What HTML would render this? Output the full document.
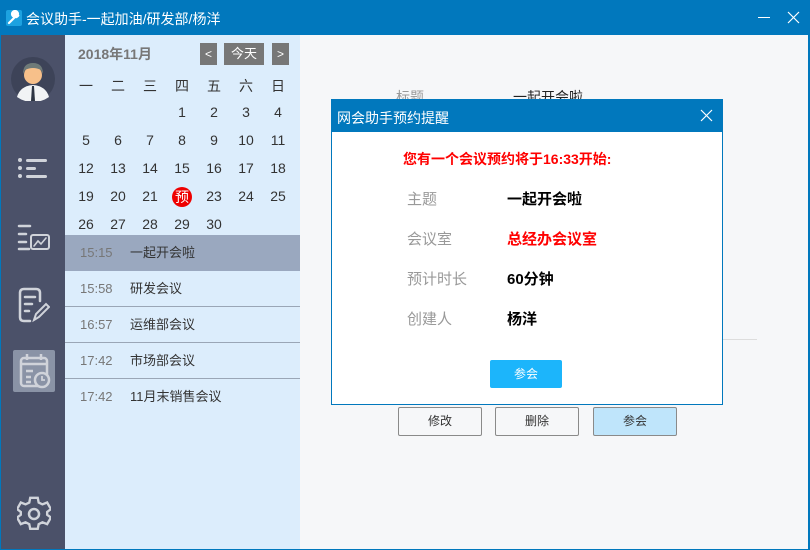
<!DOCTYPE html>
<html><head><meta charset="utf-8"><style>
*{margin:0;padding:0;box-sizing:border-box}
body{width:810px;height:550px;overflow:hidden;font-family:"Liberation Sans","Noto Sans CJK SC",sans-serif;background:#0078bd;position:relative}
.a{position:absolute}
.tb{left:0;top:0;width:810px;height:35px;background:#0178bd;color:#fff;font-size:14px}
.side{left:1px;top:35px;width:64px;height:514px;background:#4b5169}
.cal{left:65px;top:35px;width:235px;height:514px;background:#dcedfc}
.main{left:300px;top:35px;width:508px;height:514px;background:#f6f7f9}
.d{position:absolute;width:32px;text-align:center;font-size:14px;color:#333}
.it{position:absolute;left:0;width:235px;height:36px;font-size:13px;color:#333;border-bottom:1px solid #9aa6b6;line-height:36px}
.it .t{position:absolute;left:15px;top:0;color:#777}
.it .n{position:absolute;left:65px;top:0}
.btn{position:absolute;top:407px;width:84px;height:29px;border:1px solid #8a8a8a;border-radius:2px;background:#f6f7f9;font-size:12px;text-align:center;line-height:27px;color:#333}
</style></head><body>
<div class="a tb">
<svg class="a" style="left:6px;top:10px" width="16" height="16"><rect width="16" height="16" rx="2" fill="#1da2e0"/><path d="M3 13L9 7M9 7A3 3 0 1 1 12 4L10.5 5.5L11 6.5L12.5 5A3 3 0 0 1 9 7" stroke="#fff" stroke-width="2.2" fill="#fff" stroke-linecap="round"/></svg>
<div class="a" style="left:26px;top:9px">会议助手-一起加油/研发部/杨洋</div>
<div class="a" style="left:758px;top:17px;width:12px;height:1px;background:#fff"></div>
<svg class="a" style="left:787px;top:11px" width="13" height="13"><path d="M1 1L12 12M12 1L1 12" stroke="#fff" stroke-width="1.2"/></svg>
</div>
<div class="a side">
<svg class="a" style="left:10px;top:22px" width="44" height="44"><circle cx="22" cy="22" r="22" fill="#3d4358"/><path d="M6 40Q9 29 22 28Q35 29 38 40Q31 45 22 45Q13 45 6 40Z" fill="#f1f3f5"/><circle cx="22" cy="18" r="9" fill="#f7c08a"/><path d="M12 17Q12 6 22 6Q32 6 32 17L30 13Q22 9 14 13Z" fill="#6e7a78"/><path d="M21 29L23 29L24 44L20 44Z" fill="#2d3443"/></svg>
<svg class="a" style="left:16px;top:121px" width="32" height="26" fill="#d0d3da"><circle cx="3" cy="4" r="2"/><rect x="9" y="3" width="21" height="3" rx="1.5"/><circle cx="3" cy="12" r="2"/><rect x="9" y="11" width="10" height="3" rx="1.5"/><circle cx="3" cy="20" r="2"/><rect x="9" y="19" width="21" height="3" rx="1.5"/></svg>
<svg class="a" style="left:16px;top:188px" width="34" height="30" fill="none" stroke="#d0d3da" stroke-width="2.5" stroke-linecap="round"><path d="M2 3H13M2 11H9M2 19H9M2 26H12"/><rect x="14" y="12" width="18" height="14" rx="2" stroke-width="2"/><path d="M17 23L21 18L24 21L29 15" stroke-width="1.6"/></svg>
<svg class="a" style="left:17px;top:252px" width="32" height="36" fill="none" stroke="#d0d3da" stroke-width="2.5" stroke-linecap="round"><path d="M22 14V6Q22 2 18 2H6Q2 2 2 6V30Q2 34 6 34H12"/><path d="M7 10H17M7 17H14M7 24H11"/><path d="M16 33L18 27L28 17L31 20L21 30Z" stroke-width="2"/></svg>
<div class="a" style="left:12px;top:315px;width:42px;height:42px;background:#8a93a6;border-radius:2px"></div>
<svg class="a" style="left:18px;top:318px" width="32" height="36" fill="none" stroke="#d0d3da" stroke-width="2.5"><rect x="2" y="5" width="26" height="28" rx="3"/><path d="M8 1V7M22 1V7M2 11H28M7 18H14M7 24H12M7 29H12"/><circle cx="23" cy="27" r="7" fill="#8a93a6"/><path d="M23 23V27H26" stroke-width="1.8"/></svg>
<svg class="a" style="left:16px;top:461px" width="34" height="36" fill="none" stroke="#d0d3da" stroke-width="2.5"><path d="M13 3H21L22 8L26 10L31 8L35 15L31 18L31 21L35 24L31 31L26 29L22 31L21 36H13L12 31L8 29L3 31L-1 24L3 21L3 18L-1 15L3 8L8 10L12 8Z" transform="translate(1 -1) scale(0.94)"/><circle cx="17" cy="18" r="5"/></svg>
</div>
<div class="a cal">
<div class="a" style="left:13px;top:9px;font-size:14px;font-weight:bold;color:#777">2018年11月</div>
<div class="a" style="left:135px;top:8px;width:17px;height:22px;background:#777;color:#fff;font-size:12px;text-align:center;line-height:22px">&lt;</div>
<div class="a" style="left:159px;top:8px;width:40px;height:22px;background:#777;color:#fff;font-size:13px;text-align:center;line-height:22px">今天</div>
<div class="a" style="left:207px;top:8px;width:17px;height:22px;background:#777;color:#fff;font-size:12px;text-align:center;line-height:22px">&gt;</div>
<div id="g"></div>
<div class="it" style="top:200px;background:#9aa8bf;border:none"><span class="t">15:15</span><span class="n">一起开会啦</span></div>
<div class="it" style="top:236px"><span class="t">15:58</span><span class="n">研发会议</span></div>
<div class="it" style="top:272px"><span class="t">16:57</span><span class="n">运维部会议</span></div>
<div class="it" style="top:308px"><span class="t">17:42</span><span class="n">市场部会议</span></div>
<div class="it" style="top:344px;border:none"><span class="t">17:42</span><span class="n">11月末销售会议</span></div>
</div>
<div class="a main">
<div class="a" style="left:96px;top:52px;font-size:14px;color:#999">标题</div>
<div class="a" style="left:213px;top:52px;font-size:14px;color:#222">一起开会啦</div>
<div class="a" style="left:422px;top:304px;width:35px;height:1px;background:#ddd"></div>
</div>
<div class="btn" style="left:398px">修改</div>
<div class="btn" style="left:495px">删除</div>
<div class="btn" style="left:593px;background:#bfe5fb">参会</div>
<div class="a" style="left:331px;top:99px;width:392px;height:306px;background:#fff;border:1px solid #0178bd">
<div class="a" style="left:0;top:0;width:390px;height:32px;background:#0178bd;color:#fff;font-size:14px"><span class="a" style="left:5px;top:8px">网会助手预约提醒</span>
<svg class="a" style="left:368px;top:9px" width="13" height="13"><path d="M1 1L12 12M12 1L1 12" stroke="#fff" stroke-width="1.2"/></svg></div>
<div class="a" style="left:71px;top:49px;font-size:14px;font-weight:bold;color:#f00">您有一个会议预约将于16:33开始:</div>
<div class="a" style="left:75px;top:88px;font-size:15px;color:#999">主题</div>
<div class="a" style="left:175px;top:88px;font-size:15px;font-weight:bold;color:#000">一起开会啦</div>
<div class="a" style="left:75px;top:128px;font-size:15px;color:#999">会议室</div>
<div class="a" style="left:175px;top:128px;font-size:15px;font-weight:bold;color:#f00">总经办会议室</div>
<div class="a" style="left:75px;top:168px;font-size:15px;color:#999">预计时长</div>
<div class="a" style="left:175px;top:168px;font-size:15px;font-weight:bold;color:#000">60分钟</div>
<div class="a" style="left:75px;top:208px;font-size:15px;color:#999">创建人</div>
<div class="a" style="left:175px;top:208px;font-size:15px;font-weight:bold;color:#000">杨洋</div>
<div class="a" style="left:158px;top:260px;width:72px;height:28px;background:#1cb5fb;border-radius:2px;color:#fff;font-size:12px;text-align:center;line-height:28px">参会</div>
</div>
<script>
var g=document.getElementById('g'),h='';
var w=['一','二','三','四','五','六','日'];
for(var i=0;i<7;i++)h+='<div class="d" style="left:'+(5+i*32)+'px;top:41px">'+w[i]+'</div>';
for(var n=1;n<=30;n++){var p=n+2,c=p%7,r=Math.floor(p/7);var x=5+c*32,y=69+r*28;
if(n==22)h+='<div class="d" style="left:'+(x+6)+'px;top:'+(y-1)+'px;width:20px;height:20px;border-radius:10px;background:#e00;color:#fff;line-height:20px">预</div>';
else h+='<div class="d" style="left:'+x+'px;top:'+y+'px">'+n+'</div>';}
g.innerHTML=h;
</script>
</body></html>
